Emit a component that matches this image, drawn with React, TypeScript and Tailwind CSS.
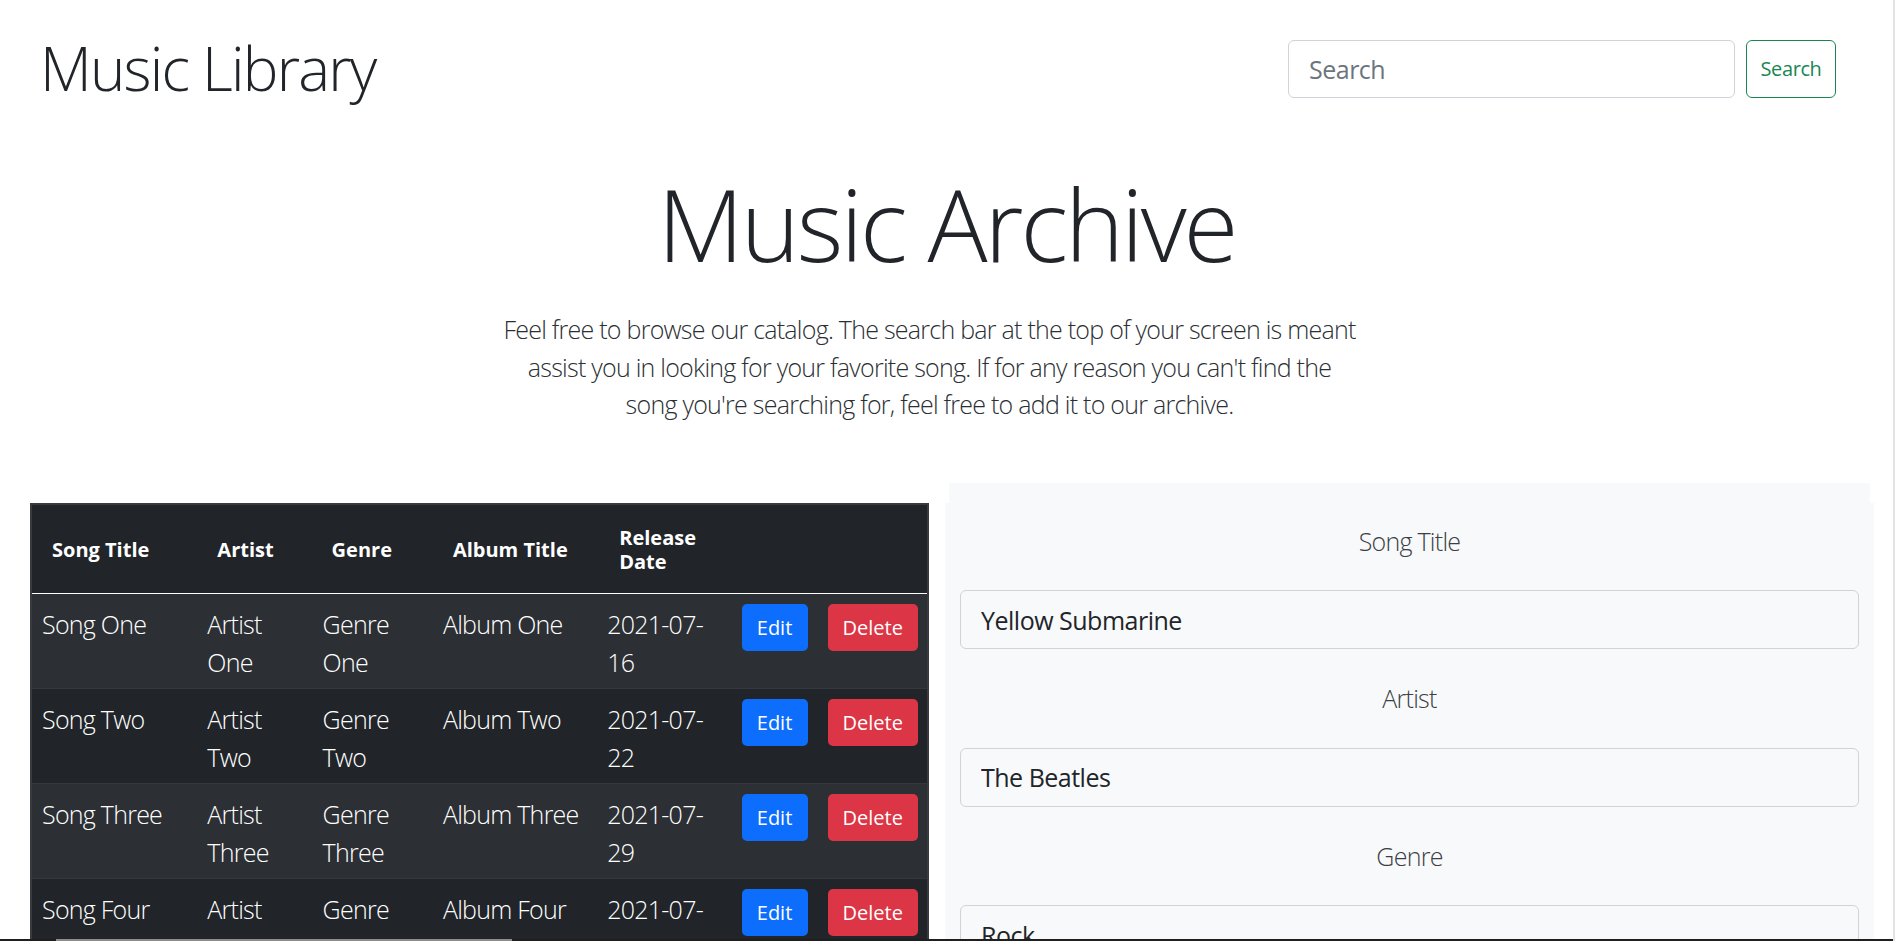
import React from "react";

type Song = {
  title: string;
  artist: string;
  genre: string;
  album: string;
  date: string;
};

const songs: Song[] = [
  { title: "Song One", artist: "Artist One", genre: "Genre One", album: "Album One", date: "2021-07-16" },
  { title: "Song Two", artist: "Artist Two", genre: "Genre Two", album: "Album Two", date: "2021-07-22" },
  { title: "Song Three", artist: "Artist Three", genre: "Genre Three", album: "Album Three", date: "2021-07-29" },
  { title: "Song Four", artist: "Artist Four", genre: "Genre Four", album: "Album Four", date: "2021-07-30" },
];

const fields = [
  { label: "Song Title", value: "Yellow Submarine" },
  { label: "Artist", value: "The Beatles" },
  { label: "Genre", value: "Rock" },
  { label: "Album Title", value: "Yellow Submarine" },
];

const Navbar = () => (
  <nav className="flex items-start justify-between pl-[40px] pr-[57px]">
    <h1 className="mt-[32px] text-[60px] leading-[72px] font-light tracking-[-0.03em] text-[#212529]">Music Library</h1>
    <form className="mt-[40px] flex gap-[11px]" onSubmit={(e) => e.preventDefault()}>
      <input
        type="search"
        placeholder="Search"
        className="w-[447px] h-[58px] rounded-[6px] border border-[#ced4da] bg-white px-[20px] text-[25px] tracking-[-0.02em] text-[#212529] placeholder:text-[#6c757d] outline-none"
      />
      <button className="w-[90px] h-[58px] rounded-[6px] border border-[#198754] text-[20px] tracking-[-0.02em] text-[#198754]">
        Search
      </button>
    </form>
  </nav>
);

const SongsTable = () => (
  <table className="mt-[20px] w-[899px] table-fixed border-collapse border-2 border-[#373b3e] bg-[#212529] text-white">
    <colgroup>
      <col className="w-[166px]" />
      <col className="w-[115px]" />
      <col className="w-[120px]" />
      <col className="w-[164px]" />
      <col className="w-[134px]" />
      <col className="w-[86px]" />
      <col className="w-[110px]" />
    </colgroup>
    <thead>
      <tr className="h-[90px] border-b border-white text-left text-[20px] leading-[24px] font-bold">
        <th className="pl-[20px] pr-[10px] pt-[2px] align-middle">Song Title</th>
        <th className="pl-[20px] pr-[10px] pt-[2px] align-middle">Artist</th>
        <th className="pl-[19px] pr-[10px] pt-[2px] align-middle">Genre</th>
        <th className="pl-[20px] pr-[10px] pt-[2px] align-middle">Album Title</th>
        <th className="pl-[22px] pr-[10px] pt-[2px] align-middle">Release Date</th>
        <th></th>
        <th></th>
      </tr>
    </thead>
    <tbody className="text-[25px] leading-[37.5px] font-light tracking-[-0.03em]">
      {songs.map((s, i) => (
        <tr key={s.title} className={`border-b border-[#32383e] ${i % 2 === 0 ? "bg-[#2c3034]" : "bg-[#212529]"}`}>
          <td className="px-[10px] pt-[12px] pb-[7px] align-top">{s.title}</td>
          <td className="px-[10px] pt-[12px] pb-[7px] align-top">{s.artist}</td>
          <td className="px-[10px] pt-[12px] pb-[7px] align-top">{s.genre}</td>
          <td className="px-[10px] pt-[12px] pb-[7px] align-top whitespace-nowrap">{s.album}</td>
          <td className="px-[10px] pt-[12px] pb-[7px] align-top">
            {s.date.slice(0, 8)}
            <br />
            {s.date.slice(8)}
          </td>
          <td className="pl-[10px] pt-[10px] align-top">
            <button className="w-[66px] h-[47px] rounded-[5px] bg-[#0d6efd] text-[20px] font-normal tracking-normal text-white">Edit</button>
          </td>
          <td className="pl-[10px] pt-[10px] align-top">
            <button className="w-[90px] h-[47px] rounded-[5px] bg-[#dc3545] text-[20px] font-normal tracking-normal text-white">Delete</button>
          </td>
        </tr>
      ))}
    </tbody>
  </table>
);

const SongForm = () => (
  <div className="w-[929px]">
    <div className="mx-[4px] h-[20px] bg-[#f8f9fa]" />
    <form className="bg-[#f8f9fa] px-[15px] pt-[20px]" onSubmit={(e) => e.preventDefault()}>
      {fields.map((f) => (
        <div key={f.label} className="mb-[31px]">
          <label className="block text-center text-[25px] leading-[37.5px] font-light tracking-[-0.03em] text-[#3b3f44]">
            {f.label}
          </label>
          <input
            defaultValue={f.value}
            className="mt-[30px] block w-full h-[59px] rounded-[6px] border border-[#ced4da] bg-[#f8f9fa] px-[20px] text-[25px] tracking-[-0.02em] text-[#212529] outline-none"
          />
        </div>
      ))}
    </form>
  </div>
);

export default function App() {
  return (
    <div className="relative h-screen overflow-hidden border-r-2 border-[#e3e3e3] bg-white font-['Open_Sans',sans-serif] text-[#212529]">
      <Navbar />
      <h2 className="mt-[59px] text-center text-[100px] leading-[120px] font-light tracking-[-0.03em]">Music Archive</h2>
      <div className="mt-[28px] flex justify-center pr-[34px]">
        <p className="w-[900px] text-center text-[25px] leading-[37.5px] font-light tracking-[-0.03em] text-[#2b2f33]">
          Feel free to browse our catalog. The search bar at the top of your screen is meant
          <br />
          assist you in looking for your favorite song. If for any reason you can't find the
          <br />
          song you're searching for, feel free to add it to our archive.
        </p>
      </div>
      <div className="mt-[59px] flex items-start gap-[16px] pl-[30px]">
        <SongsTable />
        <SongForm />
      </div>
      <div className="absolute bottom-0 left-0 right-0 h-[2px] bg-[#1f1f1f]">
        <div className="ml-[56px] h-full w-[456px] bg-[#8c8c8c]" />
      </div>
    </div>
  );
}
